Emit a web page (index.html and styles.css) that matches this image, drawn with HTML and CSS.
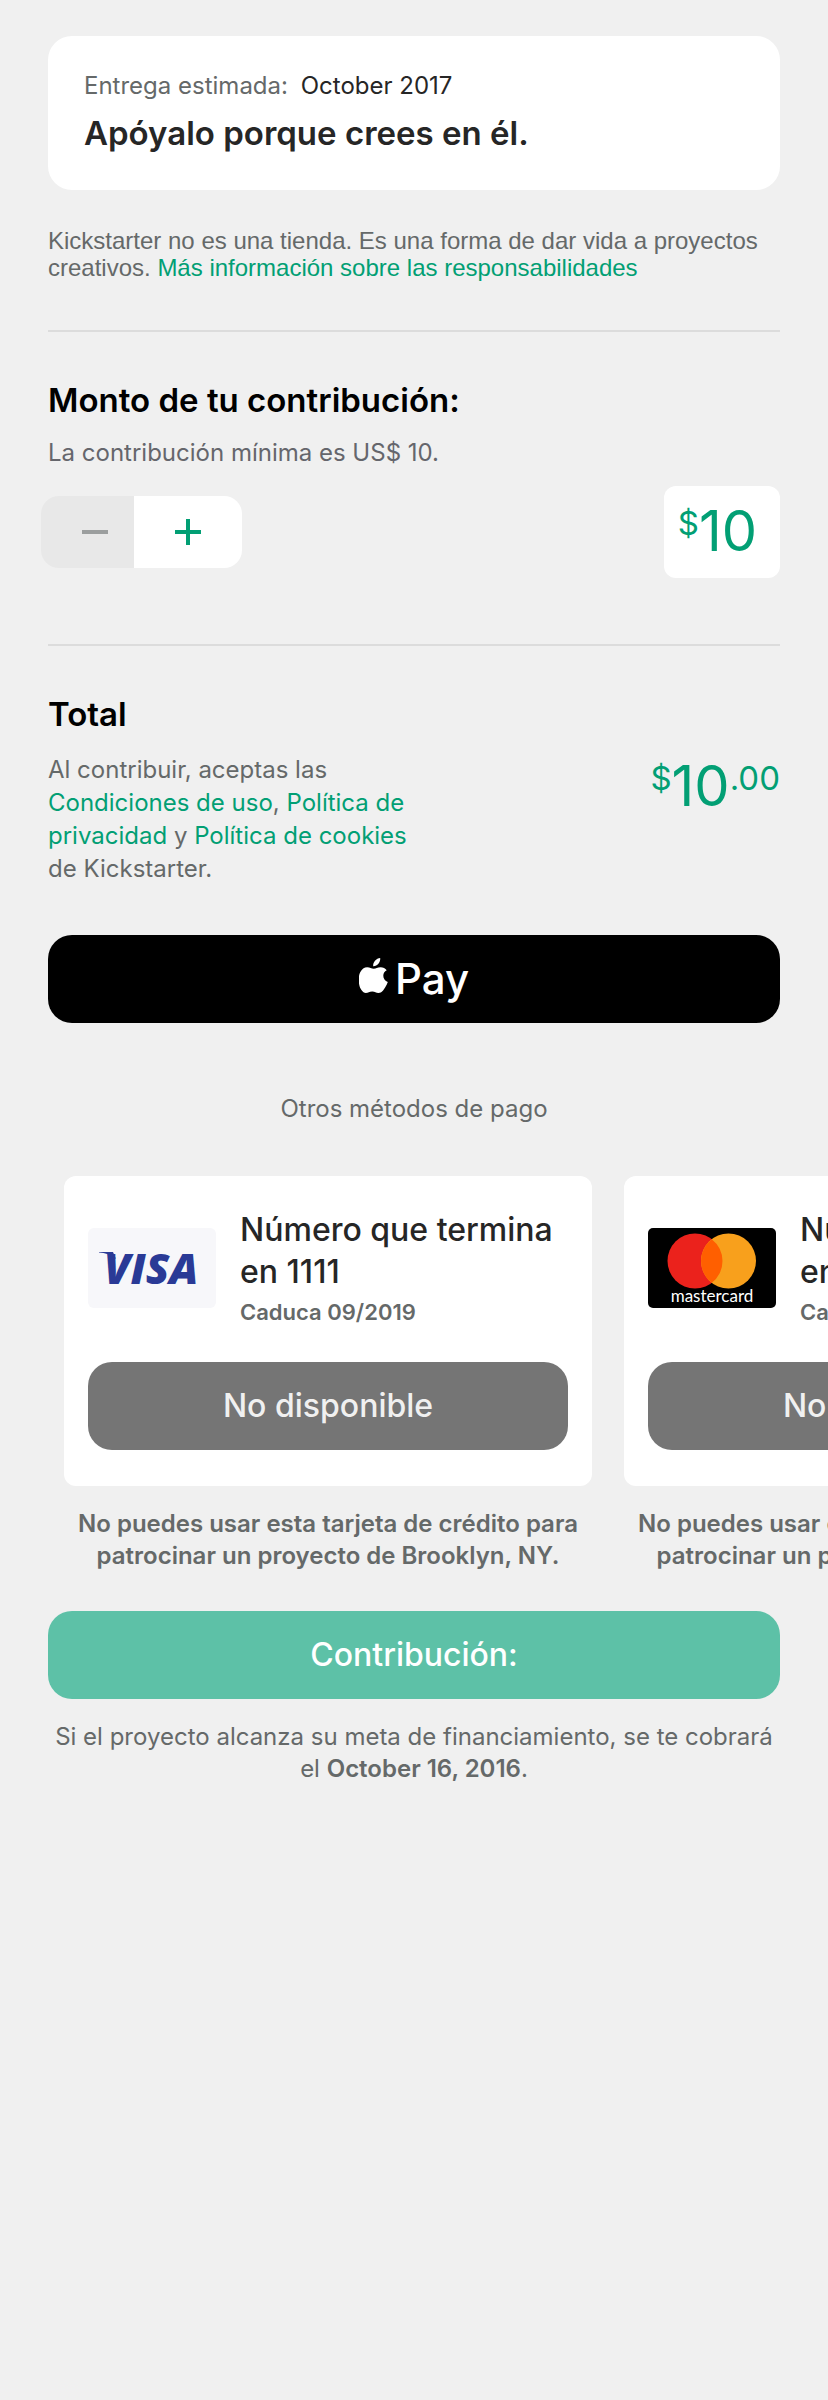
FILE: index.html
```html
<!DOCTYPE html>
<html lang="es">
<head>
<meta charset="utf-8">
<meta name="viewport" content="width=device-width, initial-scale=1">
<title>Contribución</title>
<link rel="stylesheet" href="styles.css">
</head>
<body>
<main class="page">
  <section class="reward">
    <p class="reward-date">Entrega estimada: <span class="date">October 2017</span></p>
    <h1 class="reward-title">Apóyalo porque crees en él.</h1>
  </section>

  <p class="notice">Kickstarter no es una tienda. Es una forma de dar vida a proyectos creativos. <a href="#">Más información sobre las responsabilidades</a></p>

  <section class="block">
    <h2 class="heading"><label for="amount">Monto de tu contribución:</label></h2>
    <p class="hint">La contribución mínima es US$ 10.</p>
    <div class="amount-row">
      <div class="stepper">
        <button class="step step-minus" type="button" aria-label="Disminuir" disabled>
          <svg width="26" height="26" viewBox="0 0 26 26"><path d="M0 13h26" stroke="currentColor" stroke-width="4"/></svg>
        </button>
        <button class="step step-plus" type="button" aria-label="Aumentar">
          <svg width="26" height="26" viewBox="0 0 26 26"><path d="M0 13h26M13 0v26" stroke="currentColor" stroke-width="4"/></svg>
        </button>
      </div>
      <div class="amount-box">
        <span class="small-figure">$</span>
        <input class="amount-input" id="amount" type="text" inputmode="decimal" value="10">
      </div>
    </div>
  </section>

  <section class="block">
    <h2 class="heading">Total</h2>
    <div class="total-row">
      <p class="terms">Al contribuir, aceptas las <a href="#">Condiciones de uso</a>, <a href="#">Política de privacidad</a> y <a href="#">Política de cookies</a> de Kickstarter.</p>
      <p class="total"><span class="small-figure">$</span><span class="large-figure">10</span><span class="small-figure">.00</span></p>
    </div>
  </section>

  <button class="button apple-pay" type="button" aria-label="Apple Pay">
    <svg class="apple" width="30" height="36" viewBox="0 0 30 36" fill="#fff"><path d="M21.2 0C21.5 2 20.7 4.100 19.400 5.700C18.100 7.300 16.200 8.300 14.200 8.200C13.900 6.200 14.800 4.200 16 2.800C17.300 1.200 19.400 .1 21.200 0Z"/><path d="M27.700 12.300C25.500 13.600 24.300 15.400 24.300 17.800C24.300 20.700 26 22.900 28.800 24C28.200 25.900 27.300 27.700 26.100 29.500C24.400 32.100 22.600 35 19.700 35C16.900 35.100 16.200 33.400 13.200 33.400C10.200 33.400 9.400 35 6.700 35C4.300 35 2.500 32 1.200 30C-.1 27.100-1.400 19.600 1.200 14.200C2.700 11.100 5.300 9.200 8.200 9.200C11 9.200 12.300 10.800 14.800 10.800C17.100 10.800 18.300 9.200 21.700 9.200C24 9.200 26.300 10.400 27.700 12.300Z"/></svg>
    <span class="pay-word">Pay</span>
  </button>

  <h2 class="other">Otros métodos de pago</h2>

  <ul class="cards">
    <li class="card-item">
      <div class="card">
        <div class="card-info">
          <svg class="card-logo" width="128" height="80" viewBox="0 0 128 80" role="img" aria-label="Visa">
            <rect width="128" height="80" rx="6" fill="#f7f7fa"/>
            <path d="M11 24h14l3 7C23 27 17 25 11 24.600Z" fill="#2a3a96"/>
            <text class="visa-word" x="16" y="56">VISA</text>
          </svg>
          <div class="card-text">
            <h3 class="card-name">Número que termina en 1111</h3>
            <p class="card-expiry">Caduca 09/2019</p>
          </div>
        </div>
        <button class="button unavailable" type="button" disabled>No disponible</button>
      </div>
      <p class="card-note">No puedes usar esta tarjeta de crédito para patrocinar un proyecto de Brooklyn, NY.</p>
    </li>
    <li class="card-item">
      <div class="card">
        <div class="card-info">
          <svg class="card-logo" width="128" height="80" viewBox="0 0 128 80" role="img" aria-label="Mastercard">
            <rect width="128" height="80" rx="5"/>
            <circle cx="47" cy="33" r="27.500" fill="#eb221c"/>
            <circle cx="80.500" cy="33" r="27.500" fill="#f8a01c"/>
            <path d="M63.750 11.200a27.500 27.500 0 0 1 0 43.600a27.500 27.500 0 0 1 0-43.600Z" fill="#ff5f00"/>
            <text class="mc-word" x="64" y="74">mastercard</text>
          </svg>
          <div class="card-text">
            <h3 class="card-name">Número que termina en 5555</h3>
            <p class="card-expiry">Caduca 09/2019</p>
          </div>
        </div>
        <button class="button unavailable" type="button" disabled>No disponible</button>
      </div>
      <p class="card-note">No puedes usar esta tarjeta de crédito para patrocinar un proyecto de Brooklyn, NY.</p>
    </li>
  </ul>

  <button class="button pledge" type="button">Contribución:</button>
  <p class="charge-note">Si el proyecto alcanza su meta de financiamiento, se te cobrará el <strong>October 16, 2016</strong>.</p>
</main>
</body>
</html>
```
FILE: styles.css
```css
* {
  box-sizing: border-box;
}

body {
  margin: 0;
  background: #f0f0f0;
  color: #656969;
  font: 24px/32px Inter, "Liberation Sans", sans-serif;
}

h1, h2, h3, p, ul {
  margin: 0;
  padding: 0;
}

a {
  color: #029f74;
  text-decoration: none;
}

button, input {
  border: 0;
  padding: 0;
  font-family: inherit;
}

.page {
  padding: 36px 48px;
}

.reward {
  padding: 34px 36px 36px;
  border-radius: 24px;
  background: #fff;
}

.date {
  margin-left: 6px;
  color: #262626;
}

.reward-title {
  margin-top: 10px;
  color: #262626;
  font-size: 33px;
  font-weight: 600;
  line-height: 42px;
}

.notice {
  margin: 37px 0 49px;
  font: 24px/27px "Liberation Sans", sans-serif;
}

.block {
  padding-top: 47px;
  border-top: 2px solid #dcdcdc;
}

.heading {
  color: #000;
  font-size: 33px;
  font-weight: 600;
  line-height: 42px;
}

.hint {
  margin-top: 16px;
  color: #65666c;
}

.amount-row {
  display: flex;
  align-items: center;
  justify-content: space-between;
  margin: 17px 0 66px -7px;
}

.stepper {
  display: flex;
  height: 72px;
  overflow: hidden;
  border-radius: 18px;
}

.step {
  display: flex;
  align-items: center;
  justify-content: center;
}

.step-minus {
  width: 93px;
  padding-left: 14px;
  background: #e8e8e8;
  color: #9b9e9e;
}

.step-plus {
  width: 108px;
  background: #fff;
  color: #029f74;
}

.amount-box {
  display: flex;
  align-items: flex-start;
  height: 92px;
  padding: 12px 14px;
  border-radius: 12px;
  background: #fff;
  color: #029f74;
}

.small-figure {
  font-size: 33px;
  line-height: 50px;
}

.large-figure {
  font-size: 56px;
  line-height: 66px;
}

.amount-input {
  width: 67px;
  height: 66px;
  background: transparent;
  color: inherit;
  font-size: 56px;
}

.total-row {
  display: flex;
  align-items: flex-start;
  justify-content: space-between;
  margin-top: 18px;
}

.terms {
  flex: 0 0 50%;
  line-height: 33px;
}

.total {
  display: flex;
  align-items: flex-start;
  color: #029f74;
}

.button {
  display: flex;
  align-items: center;
  justify-content: center;
  width: 100%;
  height: 88px;
  padding-bottom: 2px;
  border-radius: 24px;
  color: #fff;
  font-size: 32px;
  font-weight: 500;
}

.apple-pay {
  gap: 6px;
  margin-top: 50px;
  background: #000;
}

.apple {
  margin-bottom: 4px;
}

.pay-word {
  font-size: 42px;
  font-weight: 500;
}

.other {
  margin: 70px 0 51px;
  font-size: 24px;
  font-weight: 400;
  line-height: 32px;
  text-align: center;
}

.cards {
  display: flex;
  gap: 32px;
  margin: 0 -48px 39px;
  padding: 0 64px;
  overflow-x: auto;
  scrollbar-width: none;
  list-style: none;
}

.card-item {
  flex: 0 0 528px;
}

.card {
  padding: 33px 24px 36px;
  border-radius: 12px;
  background: #fff;
}

.card-info {
  display: flex;
  align-items: center;
  gap: 24px;
  margin-bottom: 35px;
}

.card-logo {
  flex: none;
}

.visa-word {
  fill: #2a3a96;
  font: italic 800 43px "Open Sans", sans-serif;
}

.mc-word {
  fill: #fff;
  font: 17px Lato, sans-serif;
  text-anchor: middle;
}

.card-name {
  color: #262626;
  font-size: 32px;
  font-weight: 500;
  line-height: 42px;
}

.card-expiry {
  margin-top: 4px;
  font-size: 22px;
  font-weight: 600;
  line-height: 30px;
}

.unavailable {
  background: #757575;
  color: #f0f0f0;
}

.card-note {
  margin-top: 22px;
  font-weight: 600;
  text-align: center;
}

.pledge {
  background: #5dc1a7;
}

.charge-note {
  margin-top: 22px;
  text-align: center;
}

.charge-note strong {
  font-weight: 600;
}
```
